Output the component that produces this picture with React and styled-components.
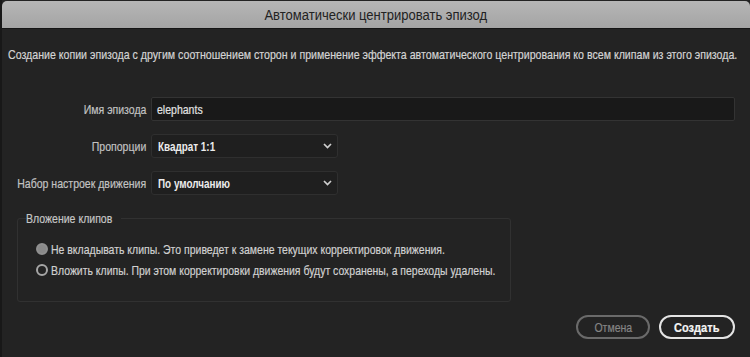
import styled, { createGlobalStyle } from 'styled-components';

const Global = createGlobalStyle`
  html, body { margin: 0; padding: 0; background: #232323; }
  body { font-family: "Liberation Sans", Arial, sans-serif; }
`;

// the dialog font is a narrow one; squeeze Liberation Sans to its width
const Squeeze = styled.span`
  display: inline-block;
  white-space: nowrap;
  transform: scaleX(${p => p.$s || 0.81});
  transform-origin: ${p => p.$origin || 'left'} center;
`;

const Dialog = styled.div`
  width: 750px;
  height: 357px;
  box-sizing: border-box;
  border-left: 2px solid #181818;
  background: #232323;
  display: flex;
  flex-direction: column;
  overflow: hidden;
`;

const TitleBar = styled.div`
  height: 27px;
  margin-top: 1px;
  border-radius: 5px 5px 0 0;
  background: linear-gradient(#b6b6b6, #a4a4a4);
  border-bottom: 1px solid #151515;
  display: flex;
  align-items: center;
  justify-content: center;
  color: #222;
  font-size: 14px;
`;

const Body = styled.div`
  flex: 1;
  display: flex;
  flex-direction: column;
  padding: 18px 15px 18px 6px;
  color: #d2d2d2;
  -webkit-text-stroke: 0.2px;
`;

const Description = styled.p`
  margin: 0;
  font-size: 13px;
  line-height: 16px;
  color: #d4d4d4;
`;

const Form = styled.div`
  display: grid;
  grid-template-columns: 138px 1fr;
  column-gap: 5px;
  row-gap: 13px;
  margin-top: 34px;
  align-items: center;
`;

const Label = styled.label`
  display: flex;
  justify-content: flex-end;
  font-size: 13px;
  color: #c2c2c2;
`;

const Input = styled.div`
  height: 24px;
  box-sizing: border-box;
  background: #191919;
  border: 1px solid #333;
  border-radius: 2px;
  padding: 0 5px;
  display: flex;
  align-items: center;
  font-size: 13px;
  color: #e2e2e2;
`;

const Select = styled.div`
  width: 187px;
  height: 24px;
  box-sizing: border-box;
  background: #1f1f1f;
  border: 1px solid #2f2f2f;
  border-radius: 3px;
  padding: 0 5px 0 6px;
  display: flex;
  align-items: center;
  justify-content: space-between;
  font-size: 13px;
  font-weight: bold;
  color: #ececec;
  -webkit-text-stroke: 0;
`;

const Chevron = () => (
  <svg width="9" height="6" viewBox="0 0 9 6">
    <path d="M1 1l3.5 3.5L8 1" fill="none" stroke="#cfcfcf" strokeWidth="1.7" />
  </svg>
);

const Group = styled.fieldset`
  margin: 16px 0 0 9px;
  width: 494px;
  min-width: 0;
  box-sizing: border-box;
  border: 1px solid #313131;
  border-radius: 3px;
  padding: 15px 0 23px 18px;
  display: flex;
  flex-direction: column;
  gap: 5px;
`;

const Legend = styled.legend`
  font-size: 13px;
  line-height: 15px;
  color: #c6c6c6;
  padding: 0;
  margin-left: -10px;
  width: 95px;
`;

const Option = styled.div`
  display: flex;
  align-items: center;
  gap: 3px;
  height: 16px;
  font-size: 13px;
  color: #d0d0d0;
`;

const Radio = styled.span`
  flex: none;
  width: 12px;
  height: 12px;
  border-radius: 50%;
  box-sizing: border-box;
  border: 2px solid ${p => (p.$checked ? '#909090' : '#a6a6a6')};
  background: ${p => (p.$checked ? '#8a8a8a' : 'transparent')};
`;

const Footer = styled.div`
  margin-top: auto;
  display: flex;
  justify-content: flex-end;
  gap: 9px;
`;

const Button = styled.button`
  width: ${p => (p.$primary ? 76 : 74)}px;
  height: 24px;
  padding: 0;
  border-radius: 12px;
  background: transparent;
  font-family: inherit;
  font-size: 13px;
  display: flex;
  align-items: center;
  justify-content: center;
  border: 2px solid ${p => (p.$primary ? '#e4e4e4' : '#6a6a6a')};
  color: ${p => (p.$primary ? '#f4f4f4' : '#858585')};
  font-weight: ${p => (p.$primary ? 'bold' : 'normal')};
`;

export default function App() {
  return (
    <>
      <Global />
      <Dialog>
        <TitleBar><Squeeze $s={0.93} $origin="center">Автоматически центрировать эпизод</Squeeze></TitleBar>
        <Body>
          <Description>
            <Squeeze $s={0.816}>Создание копии эпизода с другим соотношением сторон и применение эффекта автоматического центрирования ко всем клипам из этого эпизода.</Squeeze>
          </Description>
          <Form>
            <Label><Squeeze $origin="right">Имя эпизода</Squeeze></Label>
            <Input><Squeeze>elephants</Squeeze></Input>
            <Label><Squeeze $origin="right">Пропорции</Squeeze></Label>
            <Select><Squeeze $s={0.76}>Квадрат 1:1</Squeeze><Chevron /></Select>
            <Label><Squeeze $origin="right">Набор настроек движения</Squeeze></Label>
            <Select><Squeeze $s={0.76}>По умолчанию</Squeeze><Chevron /></Select>
          </Form>
          <Group>
            <Legend><Squeeze>Вложение клипов</Squeeze></Legend>
            <Option><Radio $checked /><Squeeze $s={0.806}>Не вкладывать клипы. Это приведет к замене текущих корректировок движения.</Squeeze></Option>
            <Option><Radio /><Squeeze $s={0.804}>Вложить клипы. При этом корректировки движения будут сохранены, а переходы удалены.</Squeeze></Option>
          </Group>
          <Footer>
            <Button><Squeeze $origin="center">Отмена</Squeeze></Button>
            <Button $primary><Squeeze $s={0.85} $origin="center">Создать</Squeeze></Button>
          </Footer>
        </Body>
      </Dialog>
    </>
  );
}
